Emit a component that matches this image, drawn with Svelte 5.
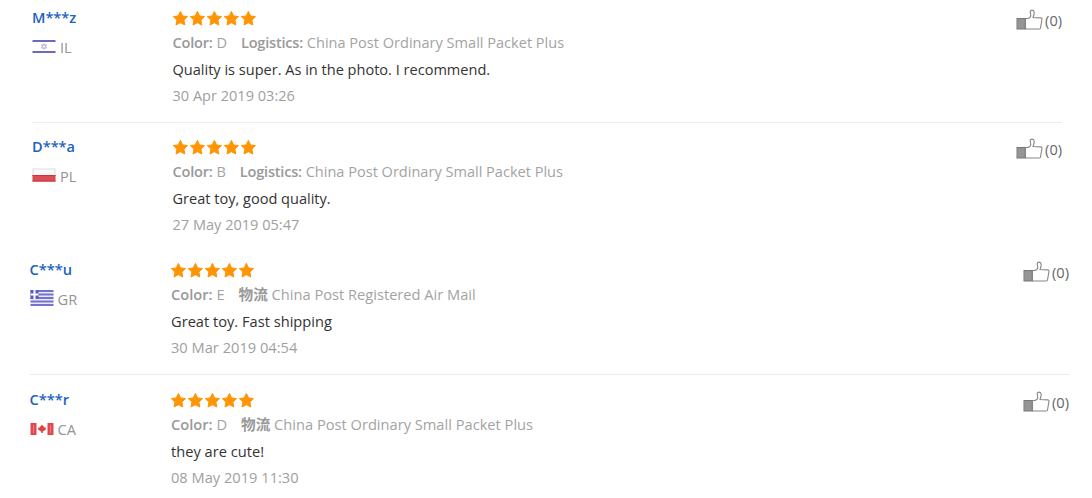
<script lang="ts">
  type Review = {
    name: string;
    country: string;
    color: string;
    shipLabel: string;
    shipping: string;
    text: string;
    date: string;
    likes: number;
  };

  const groups: Array<{ id: string; reviews: Review[] }> = [
    {
      id: 'first',
      reviews: [
        { name: 'M***z', country: 'IL', color: 'D', shipLabel: 'Logistics:', shipping: 'China Post Ordinary Small Packet Plus', text: 'Quality is super. As in the photo. I recommend.', date: '30 Apr 2019 03:26', likes: 0 },
        { name: 'D***a', country: 'PL', color: 'B', shipLabel: 'Logistics:', shipping: 'China Post Ordinary Small Packet Plus', text: 'Great toy, good quality.', date: '27 May 2019 05:47', likes: 0 }
      ]
    },
    {
      id: 'second',
      reviews: [
        { name: 'C***u', country: 'GR', color: 'E', shipLabel: '物流', shipping: 'China Post Registered Air Mail', text: 'Great toy. Fast shipping', date: '30 Mar 2019 04:54', likes: 0 },
        { name: 'C***r', country: 'CA', color: 'D', shipLabel: '物流', shipping: 'China Post Ordinary Small Packet Plus', text: 'they are cute!', date: '08 May 2019 11:30', likes: 0 }
      ]
    }
  ];

  const stars = [0, 1, 2, 3, 4];
</script>

{#snippet flag(code: string)}
  <svg class="flag" width="24" height="18" viewBox="0 0 24 18">
    {#if code === 'IL'}
      <path d="M.5 3h23M.5 14h23" stroke="#6b6bbd" stroke-width="2" />
      <path d="M12 5.700l2.600 4.400H9.400zM12 11.300l2.600-4.400H9.400z" fill="none" stroke="#b3b3df" stroke-width=".9" />
    {:else if code === 'PL'}
      <rect x="1" y="2" width="22" height="12" fill="#fafafa" stroke="#dedede" />
      <rect x=".5" y="8" width="23" height="6.5" fill="#d94f54" />
      <path d="M.5 14h23M.5 8.500h23" stroke="#cd3339" />
    {:else if code === 'GR'}
      <rect x=".5" y="0" width="23" height="16" fill="#e9e9fa" />
      <path d="M.5 1h23M.5 4.500h23M.5 8h23M.5 11.500h23M.5 15h23" stroke="#7474cd" stroke-width="2" />
      <rect x=".5" y="0" width="8" height="9" fill="#5a5abf" />
      <path d="M4.500 0v9M.5 4.500h8" stroke="#fff" stroke-width="2" />
    {:else}
      <rect x=".5" y="3" width="23" height="12" fill="#fff" />
      <rect x=".5" y="3" width="6" height="12" fill="#dc4a50" />
      <rect x="17.5" y="3" width="6" height="12" fill="#dc4a50" />
      <path d="M3.500 5v8M20.500 5v8" stroke="#e98084" />
      <path d="M12 4.500l1.300 2 1-.3-.2 1.500 2-.4-.5 1.500.5.8-3.300 2V13h-1.600v-1.400l-3.300-2 .5-.8-.5-1.500 2 .4-.2-1.500 1 .3z" fill="#dc4248" />
    {/if}
  </svg>
{/snippet}

<main>
  {#each groups as group}
    <section class={group.id}>
      {#each group.reviews as review}
        <article class="review">
          <div class="user">
            <div class="name">{review.name}</div>
            <div class="country">
              {@render flag(review.country)}
              <span>{review.country}</span>
            </div>
          </div>

          <div class="content">
            <div class="stars">
              {#each stars as star}
                <svg width="17" height="17" viewBox="0 0 17 17">
                  <path d="M8.400 1.400l2.200 4.500 4.900.7-3.600 3.500.9 4.900-4.400-2.300L4 15l.9-4.900-3.600-3.500 4.900-.7z" fill="#fe9505" stroke="#fe9505" stroke-width="1" stroke-linejoin="round" />
                </svg>
              {/each}
            </div>
            <div class="meta">
              <span><b>Color:</b> {review.color}</span>
              <span><b>{review.shipLabel}</b> {review.shipping}</span>
            </div>
            <div class="text">{review.text}</div>
            <div class="date">{review.date}</div>
          </div>

          <div class="likes">
            <svg width="27" height="22" viewBox="0 0 27 22">
              <rect x="1" y="9.500" width="8" height="10.500" fill="#a3a3a3" stroke="#777" />
              <path d="M3 10v10M5 10v10M7 10v10" stroke="#7c7c7c" stroke-width=".7" />
              <path d="M9.500 9.500h2.300c1.500-.5 3-1.900 3-3.300l-.6-3.100c0-1.300.9-2 1.900-2 1.200 0 2 .9 2.100 2.100.1 1.700-.5 3.500-1.200 5.400l8 .3c.8 0 1.100.5 1 1.100l-1.500 9c-.1.600-.5 1-1.100 1H9.500z" fill="#fff" stroke="#858585" stroke-width="1.100" />
            </svg>
            <span>({review.likes})</span>
          </div>
        </article>
      {/each}
    </section>
  {/each}
</main>

<style>
  :global(body) {
    background: #fff;
  }

  main {
    height: 498px;
    overflow: hidden;
    font-family: 'Open Sans', 'Noto Sans CJK SC', sans-serif;
    font-size: 14.55px;
    color: #939393;
  }

  .first {
    height: 252px;
    padding: 0 30px 0 32px;
    box-sizing: border-box;
  }

  .second {
    padding: 0 22px 0 29.5px;
    font-size: 14.65px;
  }

  .review {
    display: grid;
    grid-template-columns: 140.5px 1fr auto;
    padding: 6px 0 16px;
  }

  .second .review {
    grid-template-columns: 141.5px 1fr auto;
  }

  .review + .review {
    padding-top: 12px;
    border-top: 1px solid #ececec;
  }

  .second .review + .review {
    padding-top: 13px;
  }

  .name {
    height: 24px;
    line-height: 22px;
    font-weight: 600;
    color: #1c63bd;
  }

  .country {
    display: flex;
    align-items: center;
    gap: 4px;
    height: 33px;
  }

  .stars {
    display: flex;
    align-items: center;
    height: 24px;
    margin-left: -1px;
  }

  .meta {
    display: flex;
    gap: 14px;
    height: 26px;
    line-height: 24px;
    color: #a3a3a3;
    white-space: nowrap;
  }

  .meta b {
    font-weight: 600;
    letter-spacing: -0.2px;
    color: #999;
  }

  .second .meta b {
    letter-spacing: 0;
  }

  .text {
    height: 28px;
    line-height: 27px;
    color: #333;
  }

  .date {
    height: 22px;
    line-height: 22px;
    color: #a0a0a0;
  }

  .second .date {
    line-height: 23px;
  }

  .likes {
    display: flex;
    align-items: center;
    gap: 2px;
    height: 28px;
    color: #666;
  }

  .second .likes {
    height: 27px;
    margin-right: 1px;
  }
</style>
